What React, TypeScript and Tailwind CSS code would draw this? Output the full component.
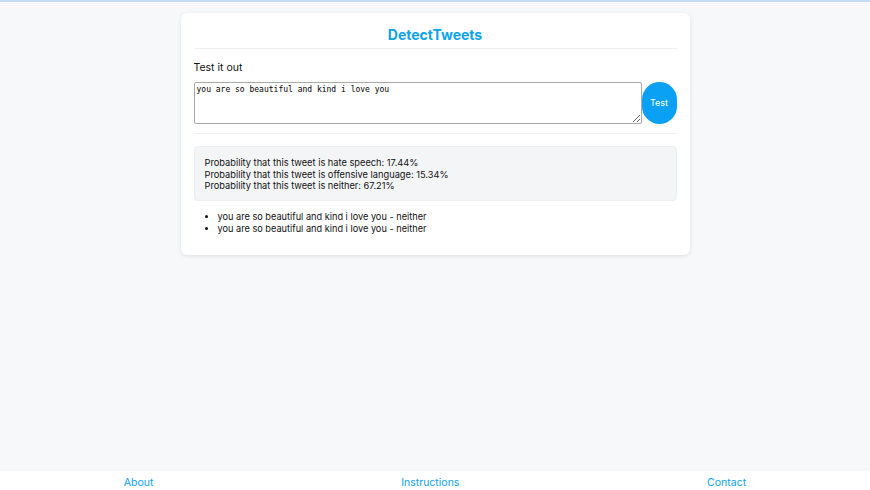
import React, { useState } from 'react';

const tweets = [
  'you are so beautiful and kind i love you - neither',
  'you are so beautiful and kind i love you - neither',
];

export default function App() {
  const [text, setText] = useState('you are so beautiful and kind i love you');

  return (
    <div className="min-h-screen flex flex-col bg-[#f7f8fa] border-t-2 border-[#c6dbf0] font-['Inter',sans-serif] text-[#111]">
      <main className="flex-1 pt-[11px]">
        <div className="mx-auto w-[509px] bg-white rounded-md shadow-[0_1px_4px_rgba(0,0,0,0.1)] px-[13px] pt-[12px] pb-[20px]">
          <h1 className="text-center text-[14px] font-bold text-[#0ba2f2] leading-[20px] pb-[3px] border-b border-[#eef0f2]">
            DetectTweets
          </h1>
          <p className="mt-[12px] text-[10.5px] leading-[14px]">Test it out</p>
          <div className="mt-[7px] flex items-stretch pb-[9px] border-b border-[#eef0f2]">
            <textarea
              value={text}
              onChange={(e) => setText(e.target.value)}
              className="w-[448px] h-[42px] border border-[#a9a9a9] rounded-[2px] px-[2px] py-[1px] font-['DejaVu_Sans_Mono',monospace] text-[8px] leading-[11px] text-black resize-y focus:outline-none"
            />
            <button className="w-[35px] h-[42px] rounded-full bg-[#0aa1f5] text-white text-[9px]">
              Test
            </button>
          </div>
          <div className="mt-[12px] bg-[#f4f5f7] border border-[#eceef1] rounded-[4px] px-[10px] pt-[10px] pb-[8px] text-[9.25px] leading-[11.5px]">
            <p>Probability that this tweet is hate speech: 17.44%</p>
            <p>Probability that this tweet is offensive language: 15.34%</p>
            <p>Probability that this tweet is neither: 67.21%</p>
          </div>
          <ul className="mt-[10px] list-disc pl-[24px] text-[9.2px] leading-[12px]">
            {tweets.map((t, i) => (
              <li key={i}>{t}</li>
            ))}
          </ul>
        </div>
      </main>
      <footer className="h-[19px] bg-white flex items-center justify-around pt-[4px] text-[10.5px] text-[#0ba2f2]">
        <a href="#">About</a>
        <a href="#">Instructions</a>
        <a href="#">Contact</a>
      </footer>
    </div>
  );
}
